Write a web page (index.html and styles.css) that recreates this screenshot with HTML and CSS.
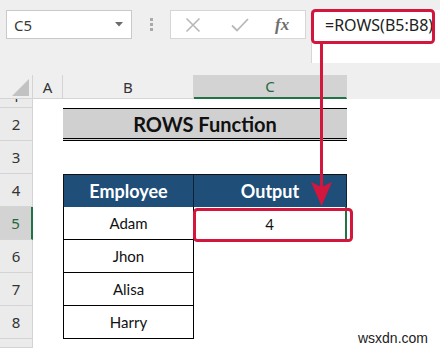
FILE: index.html
```html
<!DOCTYPE html>
<html lang="en">
<head>
  <meta charset="UTF-8">
  <title>ROWS Function</title>
  <link rel="stylesheet" href="styles.css">
</head>
<body>

<div class="window">
  <div class="toolbar">
    <div class="name-box">
      <span>C5</span>
      <svg class="drop" width="8" height="5" viewBox="0 0 8 5"><path d="M0 0H8L4 4.5Z" fill="#6b6b6b"/></svg>
    </div>
    <div class="dots"><i></i><i></i><i></i></div>
    <div class="func-box">
      <svg width="16" height="16" viewBox="0 0 16 16"><path d="M1.5 1.5L14.5 14.5M14.5 1.5L1.5 14.5" stroke="#b8b8b8" stroke-width="1.6" fill="none"/></svg>
      <svg width="18" height="14" viewBox="0 0 18 14"><path d="M1 7.5L6 12.5L17 1" stroke="#b8b8b8" stroke-width="1.8" fill="none"/></svg>
      <span class="fx">fx</span>
    </div>
    <div class="formula-bar">=ROWS(B5:B8)</div>
  </div>

  <div class="sheet">
    <div class="corner"><svg width="17" height="17" viewBox="0 0 17 17"><path d="M17 0V17H0Z" fill="#c2c2c2"/></svg></div>
    <div class="col-head">A</div>
    <div class="col-head">B</div>
    <div class="col-head selected">C</div>
    <div class="col-rest"></div>

    <div class="row-head first"><span>1</span></div>
    <div class="cell wide"></div>

    <div class="row-head">2</div>
    <div class="cell"></div>
    <div class="cell title">ROWS Function</div>
    <div class="cell"></div>

    <div class="row-head">3</div>
    <div class="cell wide"></div>

    <div class="row-head">4</div>
    <div class="cell"></div>
    <div class="cell head">Employee</div>
    <div class="cell head last">Output</div>
    <div class="cell"></div>

    <div class="row-head selected">5</div>
    <div class="cell"></div>
    <div class="cell data">Adam</div>
    <div class="cell active">4</div>
    <div class="cell"></div>

    <div class="row-head">6</div>
    <div class="cell"></div>
    <div class="cell data">Jhon</div>
    <div class="cell"></div>
    <div class="cell"></div>

    <div class="row-head">7</div>
    <div class="cell"></div>
    <div class="cell data">Alisa</div>
    <div class="cell"></div>
    <div class="cell"></div>

    <div class="row-head">8</div>
    <div class="cell"></div>
    <div class="cell data">Harry</div>
    <div class="cell"></div>
    <div class="cell"></div>

    <div class="row-head"></div>
    <div class="cell wide"></div>
  </div>

  <svg class="marks" width="440" height="348" viewBox="0 0 440 348">
    <rect x="312.5" y="10.5" width="121" height="32" rx="3" fill="none" stroke="#d3163e" stroke-width="3"/>
    <rect x="194.5" y="209.5" width="157" height="31" rx="3" fill="none" stroke="#d3163e" stroke-width="3"/>
    <path d="M321.5 44V190" stroke="#d3163e" stroke-width="3"/>
    <path d="M311 182L321.5 187L332 182L321.5 206Z" fill="#d3163e"/>
  </svg>

  <div class="watermark">wsxdn.com</div>
</div>

</body>
</html>
```

FILE: styles.css
```css
body {
  margin: 0;
  background: #ffffff;
}
.window {
  position: relative;
  width: 440px;
  height: 348px;
  overflow: hidden;
  font-family: 'Noto Sans', sans-serif;
  color: #333;
}
.toolbar {
  height: 75px;
  background: #efefef;
  display: flex;
  align-items: flex-start;
  padding: 10px 0 0 6px;
  box-sizing: border-box;
}
.name-box {
  width: 126px;
  height: 29px;
  box-sizing: border-box;
  background: #fff;
  border: 1px solid #c9c9c9;
  display: flex;
  align-items: center;
  justify-content: space-between;
  padding: 0 8px 0 7px;
  font-size: 15px;
  color: #3a3a3a;
}
.dots {
  width: 38px;
  height: 29px;
  display: flex;
  flex-direction: column;
  align-items: center;
  justify-content: center;
  gap: 2px;
}
.dots i {
  width: 3px;
  height: 3px;
  background: #a9a9a9;
}
.func-box {
  width: 136px;
  height: 29px;
  box-sizing: border-box;
  background: #fff;
  border: 1px solid #d6d6d6;
  display: flex;
  align-items: center;
  padding-left: 14px;
  gap: 30px;
}
.fx {
  font-family: 'Liberation Serif', serif;
  font-style: italic;
  font-weight: bold;
  font-size: 17px;
  color: #6e6e6e;
  margin-left: -4px;
}
.formula-bar {
  margin-left: 5px;
  flex: 1;
  height: 53px;
  background: #fff;
  border-left: 1px solid #d6d6d6;
  box-sizing: border-box;
  padding: 4px 0 0 13px;
  font-size: 16px;
  color: #222;
  white-space: nowrap;
}
.sheet {
  display: grid;
  grid-template-columns: 33px 30px 131px 153px 93px;
  grid-template-rows: 24px 9px repeat(7, 33px) 9px;
}
.corner {
  background: #efefef;
  border-right: 1px solid #d4d4d4;
  border-bottom: 1px solid #d4d4d4;
  display: flex;
  align-items: flex-end;
  justify-content: flex-end;
  padding: 0 3px 2px 0;
}
.col-head {
  background: #efefef;
  border-right: 1px solid #d4d4d4;
  border-bottom: 1px solid #d4d4d4;
  display: flex;
  align-items: center;
  justify-content: center;
  font-size: 15px;
  color: #333;
}
.col-head.selected {
  background: #d3d3d3;
  border-bottom: 2px solid #217346;
  color: #1e6a40;
}
.col-rest {
  background: #efefef;
}
.row-head {
  background: #ebebeb;
  border-right: 1px solid #d4d4d4;
  border-bottom: 1px solid #d4d4d4;
  display: flex;
  align-items: center;
  justify-content: center;
  font-size: 15px;
  color: #333;
  overflow: hidden;
}
.row-head.first {
  align-items: flex-start;
}
.row-head.first span {
  line-height: 33px;
  margin-top: -19px;
}
.row-head.selected {
  background: #d3d3d3;
  border-right: 2px solid #217346;
  color: #1e6a40;
}
.cell {
  font-family: 'Lato', sans-serif;
  display: flex;
  align-items: center;
  justify-content: center;
  color: #111;
}
.wide {
  grid-column: 2 / 6;
}
.title {
  grid-column: 3 / 5;
  background: #d0d0d0;
  border-top: 1px solid #000;
  border-bottom: 3px double #000;
  font-size: 20px;
  font-weight: bold;
  color: #111;
}
.title + .cell {
  grid-column: 5;
}
.head {
  background: #1f4e78;
  color: #fff;
  font-size: 18px;
  font-weight: bold;
  border-top: 1px solid #111;
  border-right: 1px solid #0e2236;
  border-left: 1px solid #111;
}
.head.last {
  border-left: none;
}
.data {
  font-size: 15px;
  border-left: 1px solid #000;
  border-right: 1px solid #000;
  border-bottom: 1px solid #000;
}
.active {
  font-size: 15px;
  border-right: 2px solid #217346;
}
.marks {
  position: absolute;
  top: 0;
  left: 0;
  pointer-events: none;
}
.watermark {
  position: absolute;
  right: 12px;
  bottom: 2px;
  font-family: 'Liberation Sans', sans-serif;
  font-size: 14px;
  color: #222;
}
```
